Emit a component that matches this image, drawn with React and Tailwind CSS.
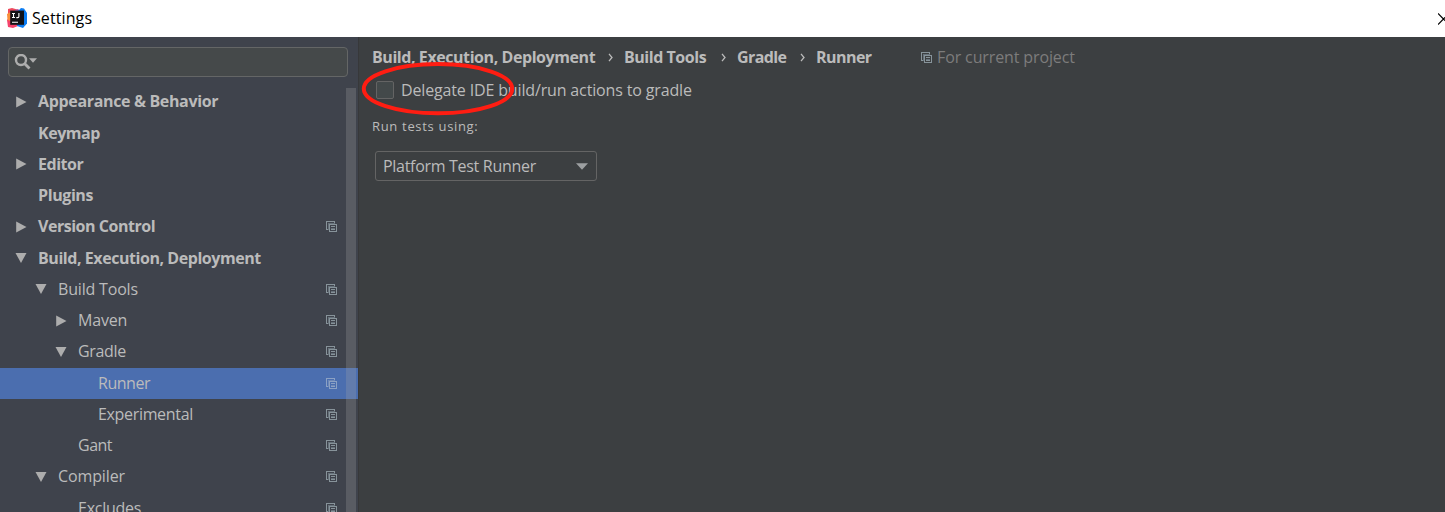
const rows = [
  { label: "Appearance & Behavior", pad: "pl-[15px]", arrow: "right", bold: true, track: "tracking-[-0.34px]" },
  { label: "Keymap", pad: "pl-[15px]", bold: true, track: "tracking-[-0.45px]" },
  { label: "Editor", pad: "pl-[15px]", arrow: "right", bold: true, track: "tracking-[-0.45px]" },
  { label: "Plugins", pad: "pl-[15px]", bold: true, track: "tracking-[-0.4px]" },
  { label: "Version Control", pad: "pl-[15px]", arrow: "right", bold: true, copy: true, track: "tracking-[-0.47px]" },
  { label: "Build, Execution, Deployment", pad: "pl-[15px]", arrow: "down", bold: true, copy: false, track: "tracking-[-0.44px]" },
  { label: "Build Tools", pad: "pl-[35px]", arrow: "down", copy: true, track: "tracking-[-0.18px]" },
  { label: "Maven", pad: "pl-[55px]", arrow: "right", copy: true, track: "tracking-[-0.2px]" },
  { label: "Gradle", pad: "pl-[55px]", arrow: "down", copy: true, track: "tracking-[-0.33px]" },
  { label: "Runner", pad: "pl-[75px]", copy: true, selected: true, track: "tracking-[-0.47px]" },
  { label: "Experimental", pad: "pl-[75px]", copy: true, track: "tracking-[-0.33px]" },
  { label: "Gant", pad: "pl-[55px]", copy: true, track: "tracking-[-0.5px]" },
  { label: "Compiler", pad: "pl-[35px]", arrow: "down", copy: true, track: "tracking-[-0.12px]" },
  { label: "Excludes", pad: "pl-[55px]", copy: true, track: "tracking-[-0.25px]" },
];

function CopyIcon({ selected }) {
  const main = selected ? "#8ba1c4" : "#87939a";
  const soft = selected ? "#6d87b6" : "#66717a";
  return (
    <svg className="block size-[11px] shrink-0" viewBox="0 0 11 11" fill="none" shapeRendering="crispEdges">
      <path d="M2 8.5H.5V.5H8.5V2" stroke={main} />
      <path d="M2.5 9V2.5H9" stroke={soft} />
      <rect x="3.5" y="3.5" width="7" height="7" stroke={main} />
      <path d="M5 5.5H9M5 8.5H9" stroke={main} />
      <path d="M5 7H9" stroke={soft} />
    </svg>
  );
}

function Arrow({ dir }) {
  return (
    <svg className="h-[12px] w-[12px] shrink-0" viewBox="0 0 12 12" fill="#adadad">
      {dir === "right" && <path d="M1.2.6L11.5 6L1.2 11.4Z" />}
      {dir === "down" && <path d="M.5 1H11.5L6 11Z" />}
    </svg>
  );
}

function Logo() {
  return (
    <svg className="mb-px ml-[7px] h-[20px] w-[20px]" viewBox="0 0 20 20">
      <path d="M1 1L5 0L12 2V9L4 12L1 8Z" fill="#ee4a5d" />
      <path d="M0 12L3 8L11 16L11 18L6 20L1 19Z" fill="#f5426b" />
      <path d="M0 6L3.5 4V13L0.5 12Z" fill="#f9903a" />
      <path d="M8 2L11 1L14 4L8 6Z" fill="#b05fb0" />
      <path d="M11 3L14 0L17 .5L20 5V15.5L16 20L10 18Z" fill="#0b7cf2" />
      <rect x="3.2" y="2.6" width="13.8" height="14.2" fill="#121216" />
      <path d="M5 5.5H8M6.5 5.5V9.5M5 9.5H8M11.9 5V8.5Q11.9 9.6 10.8 9.6H9.3M5 14.3H11" stroke="#fff" strokeWidth="1.1" fill="none" />
    </svg>
  );
}

function Separator({ className }) {
  return (
    <svg className={"h-[9px] w-[5px] shrink-0 " + className} viewBox="0 0 5 9" fill="none">
      <path d="M1 .8L4 4.5L1 8.2" stroke="#bbbbbb" strokeWidth="1.3" />
    </svg>
  );
}

export default function App() {
  return (
    <div className="relative flex h-[512px] w-[1445px] flex-col overflow-hidden bg-[#3c3f41] font-['Open_Sans','Noto_Sans',sans-serif] text-[16px] whitespace-nowrap text-[#bbbbbb]">
      <header className="flex h-[37px] shrink-0 items-center bg-white text-black">
        <Logo />
        <span className="ml-[5px] text-[16px] leading-[37px] tracking-[0.1px]">Settings</span>
        <svg className="ml-auto h-[12px] w-[7px]" viewBox="0 0 7 12" fill="none">
          <path d="M0 .5L5.5 6L0 11.5M5.5 6L11 .5M5.5 6L11 11.5" stroke="#000" strokeWidth="1.2" />
        </svg>
      </header>
      <div className="flex min-h-0 flex-1">
        <aside className="relative flex w-[359px] shrink-0 flex-col border-r border-[#37383a] bg-[#3f434c]">
          <div className="mt-[10px] ml-[8px] flex h-[30px] w-[340px] shrink-0 items-center rounded-[4px] border border-[#646666] bg-[#45494a]">
            <svg className="ml-[5px] h-[17px] w-[24px]" viewBox="0 0 24 17" fill="none">
              <circle cx="7" cy="6" r="5" stroke="#adadad" strokeWidth="2.4" />
              <path d="M10.5 9.6L15.5 14.6" stroke="#adadad" strokeWidth="2.8" />
              <path d="M15 4.2H23L19 8.7Z" fill="#adadad" />
            </svg>
          </div>
          <div className="mt-[9.3px] flex flex-col">
            {rows.map((r) => (
              <div
                key={r.label}
                className={"flex h-[31.25px] shrink-0 items-center pr-[21px] " + r.pad + (r.selected ? " bg-[#4b6eaf]" : "")}
              >
                <Arrow dir={r.arrow} />
                <span className={"ml-[11px] leading-[31px] " + r.track + (r.bold ? " font-bold" : "")}>{r.label}</span>
                {r.copy && (
                  <div className="ml-auto">
                    <CopyIcon selected={r.selected} />
                  </div>
                )}
              </div>
            ))}
          </div>
          <div className="absolute top-[51px] right-[2px] bottom-0 w-[10px] bg-[#a6a6a6]/25" />
        </aside>
        <main className="flex flex-1 flex-col pl-[13px]">
          <div className="mt-[8px] flex h-[24px] items-center">
            <span className="w-[223px] font-bold tracking-[-0.43px]">Build, Execution, Deployment</span>
            <Separator className="ml-[13px]" />
            <span className="ml-[11px] w-[82px] font-bold tracking-[-0.46px]">Build Tools</span>
            <Separator className="ml-[15px]" />
            <span className="ml-[11px] w-[49px] font-bold tracking-[-0.6px]">Gradle</span>
            <Separator className="ml-[14px]" />
            <span className="ml-[11px] w-[56px] font-bold tracking-[-0.55px]">Runner</span>
            <div className="ml-[49px]">
              <CopyIcon />
            </div>
            <span className="ml-[5px] tracking-[-0.12px] text-[#7c7c7c]">For current project</span>
          </div>
          <label className="mt-[8px] ml-[4px] flex h-[26px] items-center">
            <span className="h-[18px] w-[18px] rounded-[2px] border border-[#646464] bg-[#43494a]" />
            <span className="ml-[7px] tracking-[-0.15px]">Delegate IDE build/run actions to gradle</span>
          </label>
          <div className="mt-[13px] h-[20px] text-[13px] leading-[20px] tracking-[0.68px]">Run tests using:</div>
          <div className="mt-[15px] ml-[3px] flex h-[30px] w-[222px] items-center justify-between rounded-[3px] border border-[#646464] pr-[8px] pl-[7px]">
            <span className="tracking-[-0.3px]">Platform Test Runner</span>
            <svg className="h-[7px] w-[12px]" viewBox="0 0 12 7" fill="#9da0a2">
              <path d="M0 .3H12L6 6.8Z" />
            </svg>
          </div>
        </main>
      </div>
      <svg className="pointer-events-none absolute top-[60px] left-[360px] h-[58px] w-[158px]" viewBox="0 0 158 58" fill="none">
        <ellipse cx="78" cy="28.7" rx="74.2" ry="24.6" stroke="#ff1d12" strokeWidth="4" />
      </svg>
    </div>
  );
}
